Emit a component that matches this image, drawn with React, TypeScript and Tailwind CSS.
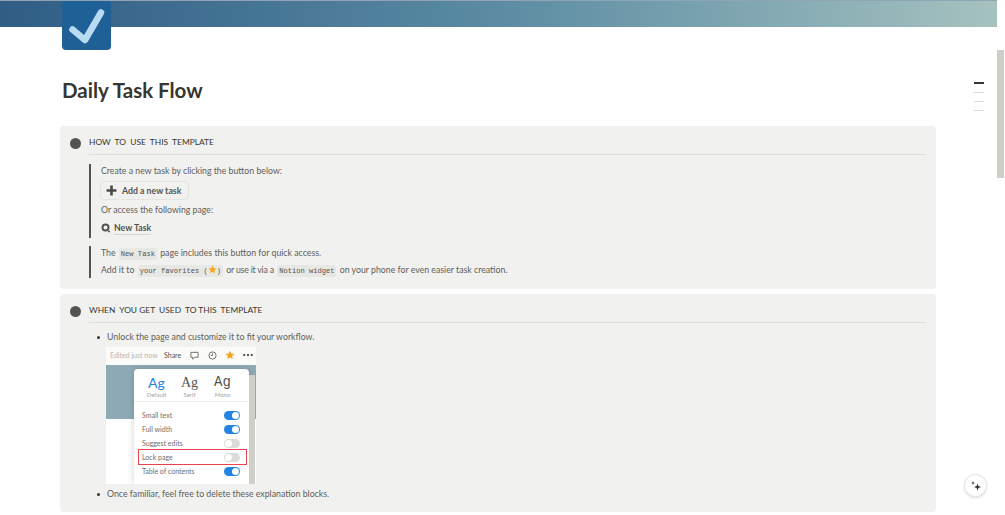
const font = "font-['Lato','Liberation_Sans',sans-serif]";

function Toggle({ on }: { on: boolean }) {
  return (
    <div className={`w-[16px] h-[9px] rounded-full flex items-center px-[1px] ${on ? "bg-[#2383e2] justify-end" : "bg-[#dcdbd8] justify-start"}`}>
      <div className="w-[7px] h-[7px] rounded-full bg-white" />
    </div>
  );
}

function SettingRow({ label, on, boxed }: { label: string; on: boolean; boxed?: boolean }) {
  return (
    <div className={`h-[14px] flex items-center justify-between pl-[3px] pr-[6px] ml-[5px] mr-[3px] ${boxed ? "outline outline-1 outline-[#e8434f]" : ""}`}>
      <span className="text-[7px] leading-none text-[#6f6e69]">{label}</span>
      <Toggle on={on} />
    </div>
  );
}

function Ag({ label, color, family, caption }: { label: string; color: string; family: string; caption: string }) {
  return (
    <div className="w-[33px] flex flex-col items-center">
      <span className={`text-[14px] leading-[17px] ${color} ${family}`}>{label}</span>
      <span className="text-[6px] leading-[8px] text-[#a5a4a0]">{caption}</span>
    </div>
  );
}

function Heading({ text }: { text: string }) {
  return (
    <div className="flex items-start">
      <div className="w-[11px] h-[11px] rounded-full bg-[#55534e] mt-[12px] ml-[10px] mr-[8px] shrink-0" />
      <div className="flex-1 h-[29px] pt-[5px] border-b border-[#dfdfdc] flex items-center mr-[10px] text-[8.4px] text-[#37352f]">
        {text}
      </div>
    </div>
  );
}

function Code({ children }: { children: React.ReactNode }) {
  return (
    <code className="font-['Liberation_Mono',monospace] text-[7.1px] text-[#55534e] bg-[#e7e7e4] rounded-[2px] px-[2px] py-[2px] mx-[1px]">
      {children}
    </code>
  );
}

function Star() {
  return (
    <svg viewBox="0 0 24 24" className="inline-block w-[9px] h-[9px] align-[-1px]">
      <path d="M12 1.5l3.2 6.9 7.5.9-5.600 5.100 1.500 7.400L12 18.100 5.400 21.800l1.500-7.400L1.300 9.300l7.500-.9z" fill="#f5a623" />
    </svg>
  );
}

export default function App() {
  return (
    <div className={`w-[1005px] h-[515px] overflow-hidden bg-white flex relative ${font} text-[#5f5e59]`}>
      <main className="flex-1 min-w-0 flex flex-col">
        <div className="h-[27px] shrink-0 bg-gradient-to-r from-[#2f5d85] via-[#5b8ca3] to-[#a5c2bf] border-t border-[#8fa5b5]" />
        <div className="px-[60px] mr-[1px]">
          <div className="ml-[2px] -mt-[26px] w-[49px] h-[49px] rounded-[4px] bg-[#1f6096] flex items-center justify-center relative">
            <svg viewBox="0 0 49 49" className="w-[49px] h-[49px]">
              <path d="M10.500 28.500L23 39 39 11.500" fill="none" stroke="#b9daf3" strokeWidth="6.500" strokeLinecap="round" strokeLinejoin="round" />
            </svg>
          </div>
          <h1 className="ml-[2px] mt-[25px] text-[20.5px] leading-[30px] font-bold text-[#37352f]">Daily Task Flow</h1>

          <section className="mt-[21px] w-[876px] h-[163px] bg-[#f1f1ef] rounded-[4px] flex flex-col">
            <Heading text={"HOW\u00a0\u00a0TO\u00a0\u00a0USE\u00a0\u00a0THIS\u00a0\u00a0TEMPLATE"} />
            <div className="ml-[29px] mt-[9px] border-l-[2px] border-[#55534e] pl-[10px] h-[74px] text-[8.75px]">
              <div className="h-[14px] leading-[14px]">Create a new task by clicking the button below:</div>
              <div className="mt-[3px] -ml-[1px] w-[89px] h-[19px] border border-[#e3e3e0] rounded-[4px] flex items-center pl-[5px] gap-[5px] font-bold text-[#55534e]">
                <svg viewBox="0 0 10 10" className="w-[11px] h-[11px] shrink-0"><path d="M5 .5v9M.5 5h9" stroke="#4b4a45" strokeWidth="2.400" /></svg>
                <span className="whitespace-nowrap">Add a new task</span>
              </div>
              <div className="h-[16px] leading-[16px] mt-[2px]">Or access the following page:</div>
              <div className="h-[18px] mt-[1px] flex items-center gap-[3px] font-bold text-[#55534e]">
                <svg viewBox="0 0 10 10" className="w-[10px] h-[10px] shrink-0"><circle cx="4.500" cy="4.500" r="3" fill="none" stroke="#55534e" strokeWidth="2" /><path d="M7 8.500h2" stroke="#55534e" strokeWidth="1.500" /></svg>
                <span className="border-b border-[#d5d5d2] leading-[13px]">New Task</span>
              </div>
            </div>
            <div className="ml-[29px] mt-[8px] border-l-[2px] border-[#55534e] pl-[10px] h-[32px] text-[8.75px]">
              <div className="h-[16px] leading-[13px]">The <Code>New Task</Code> page includes this button for quick access.</div>
              <div className="h-[16px] leading-[15px]">Add it to <Code>your favorites (<Star />)</Code> <span className="tracking-[-0.2px]">or use it via a</span> <Code>Notion widget</Code> on your phone for even easier task creation.</div>
            </div>
          </section>

          <section className="mt-[5px] w-[876px] h-[218px] bg-[#f1f1ef] rounded-[4px] flex flex-col">
            <Heading text={"WHEN\u00a0\u00a0YOU GET\u00a0\u00a0USED\u00a0\u00a0TO THIS\u00a0\u00a0TEMPLATE"} />
            <div className="pl-[37px] mt-[7px] text-[8.75px]">
              <div className="h-[14px] leading-[14px] flex items-center">
                <span className="w-[3px] h-[3px] rounded-full bg-[#37352f] mr-[7px]" />
                Unlock the page and customize it to fit your workflow.
              </div>
              <div className="ml-[9px] mt-[3px] w-[150px] h-[137px] bg-white flex flex-col relative overflow-hidden">
                <div className="h-[18px] pb-[2px] flex items-center pl-[4px] text-[7px] bg-[#fbfbfa] shrink-0">
                  <span className="text-[#b5b4b0] w-[54px] shrink-0 whitespace-nowrap">Edited just now</span>
                  <span className="text-[#55534e] w-[26px] shrink-0">Share</span>
                  <svg viewBox="0 0 10 10" className="w-[9px] h-[9px] mr-[9px] shrink-0"><path d="M1 1.500h8v5.500H5L3 9V7H1z" fill="none" stroke="#55534e" strokeWidth=".9" /></svg>
                  <svg viewBox="0 0 10 10" className="w-[9px] h-[9px] mr-[8px] shrink-0"><circle cx="5" cy="5" r="4" fill="none" stroke="#55534e" strokeWidth=".9" /><path d="M5 2.500V5H3" fill="none" stroke="#55534e" strokeWidth=".9" /></svg>
                  <svg viewBox="0 0 24 24" className="w-[10px] h-[10px] mr-[8px] shrink-0"><path d="M12 1.500l3.200 6.900 7.500.9-5.600 5.100 1.500 7.400L12 18.100 5.400 21.800l1.500-7.400L1.300 9.300l7.500-.9z" fill="#f5a623" /></svg>
                  <svg viewBox="0 0 10 4" className="w-[10px] h-[4px] shrink-0"><circle cx="1.200" cy="2" r="1.100" fill="#37352f" /><circle cx="5" cy="2" r="1.100" fill="#37352f" /><circle cx="8.800" cy="2" r="1.100" fill="#37352f" /></svg>
                </div>
                <div className="h-[54px] bg-[#8eabb5] shrink-0" />
                <div className="absolute left-[28px] top-[22px] w-[115px] h-[115px] bg-white rounded-tl-[4px] rounded-tr-[4px] shadow-[0_0_6px_rgba(0,0,0,0.18)] flex flex-col">
                  <div className="h-[33px] flex pl-[6px] pt-[5px] border-b border-[#eeeeec]">
                    <Ag label="Ag" caption="Default" color="text-[#2383e2]" family="font-['Lato',sans-serif]" />
                    <Ag label="Ag" caption="Serif" color="text-[#55534e]" family="font-['Liberation_Serif',serif]" />
                    <Ag label="Ag" caption="Mono" color="text-[#55534e]" family="font-['Liberation_Mono',monospace]" />
                  </div>
                  <div className="mt-[6px] flex flex-col">
                    <SettingRow label="Small text" on />
                    <SettingRow label="Full width" on />
                    <SettingRow label="Suggest edits" on={false} />
                    <SettingRow label="Lock page" on={false} boxed />
                    <SettingRow label="Table of contents" on />
                  </div>
                </div>
                <div className="absolute right-[1px] top-[28px] w-[6px] h-[109px] bg-[#cfcec9]" />
              </div>
              <div className="mt-[3px] h-[14px] leading-[14px] flex items-center">
                <span className="w-[3px] h-[3px] rounded-full bg-[#37352f] mr-[7px]" />
                Once familiar, feel free to delete these explanation blocks.
              </div>
            </div>
          </section>
        </div>
      </main>

      <nav className="absolute right-[21px] top-[82px] flex flex-col gap-[8px]">
        <div className="w-[10px] h-[1.500px] bg-[#37352f]" />
        <div className="w-[10px] h-px bg-[#dcdcd9]" />
        <div className="w-[10px] h-px bg-[#dcdcd9]" />
        <div className="w-[10px] h-px bg-[#dcdcd9]" />
      </nav>

      <div className="absolute left-[964px] top-[474px] w-[23px] h-[23px] rounded-full bg-white border border-[#e6e6e3] shadow-sm flex items-center justify-center">
        <svg viewBox="0 0 12 12" className="w-[12px] h-[12px]">
          <path d="M7.500 3.500l.9 2.600 2.600.9-2.600.9-.9 2.600-.9-2.600L4 7l2.600-.9z" fill="#37352f" />
          <path d="M3 1l.5 1.500L5 3l-1.500.5L3 5l-.5-1.500L1 3l1.500-.5z" fill="#37352f" />
        </svg>
      </div>

      <aside className="w-[8px] shrink-0 flex flex-col bg-white">
        <div className="h-[50px]" />
        <div className="h-[128px] w-[7px] bg-[#cfcdc8]" />
      </aside>
    </div>
  );
}
